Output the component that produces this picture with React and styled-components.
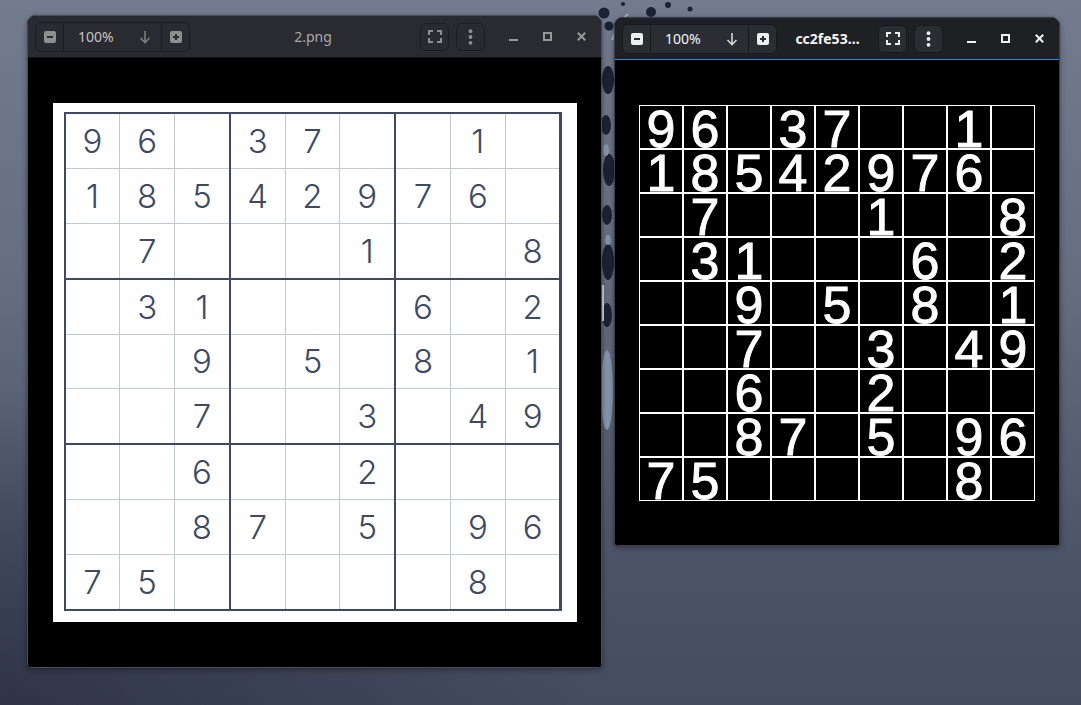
import React from 'react';
import styled, { createGlobalStyle } from 'styled-components';

const GRID = [
  [9, 6, 0, 3, 7, 0, 0, 1, 0],
  [1, 8, 5, 4, 2, 9, 7, 6, 0],
  [0, 7, 0, 0, 0, 1, 0, 0, 8],
  [0, 3, 1, 0, 0, 0, 6, 0, 2],
  [0, 0, 9, 0, 5, 0, 8, 0, 1],
  [0, 0, 7, 0, 0, 3, 0, 4, 9],
  [0, 0, 6, 0, 0, 2, 0, 0, 0],
  [0, 0, 8, 7, 0, 5, 0, 9, 6],
  [7, 5, 0, 0, 0, 0, 0, 8, 0],
];

const Global = createGlobalStyle`
  html, body { margin: 0; padding: 0; width: 1081px; height: 705px; overflow: hidden; }
  body { font-family: "Noto Sans", "Open Sans", sans-serif; }
`;

const Desktop = styled.div`
  position: relative;
  width: 1081px;
  height: 705px;
  overflow: hidden;
  background:
    radial-gradient(ellipse 55% 45% at 0% 100%, rgba(28, 34, 50, 0.55), transparent),
    linear-gradient(180deg, #737b8e 0%, #656d80 40%, #4b5367 80%, #454c60 100%);
`;

const Wallpaper = styled.svg`
  position: absolute;
  inset: 0;
`;

const Window = styled.div`
  position: absolute;
  left: ${(p) => p.$x}px;
  top: ${(p) => p.$y}px;
  width: ${(p) => p.$w}px;
  height: ${(p) => p.$h}px;
  box-sizing: border-box;
  display: flex;
  flex-direction: column;
  border: 1px solid ${(p) => (p.$active ? '#3c404b' : '#4a4f5b')};
  border-radius: 9px 9px 4px 4px;
  overflow: hidden;
  box-shadow: 0 2px 6px rgba(0, 0, 0, 0.35), 0 0 1px rgba(0, 0, 0, 0.6);
  background: #000;
`;

const HeaderBar = styled.div`
  height: 41px;
  flex-shrink: 0;
  display: flex;
  align-items: center;
  padding: 0 3px 0 7px;
  background: ${(p) => (p.$active ? '#1f2024' : '#2a2b31')};
  border-bottom: 1px solid ${(p) => (p.$active ? '#3584e4' : '#121214')};
`;

const ZoomGroup = styled.div`
  display: flex;
  height: 28px;
  border-radius: 6px;
  border: 1px solid ${(p) => (p.$active ? '#18191c' : '#1d1e23')};
  background: ${(p) => (p.$active ? '#2c2d33' : '#2a2b31')};
  overflow: hidden;
`;

const GroupButton = styled.div`
  width: ${(p) => p.$w}px;
  display: flex;
  align-items: center;
  justify-content: center;
  box-sizing: border-box;
  border-right: ${(p) => (p.$sep ? '1px solid ' + (p.$active ? '#18191c' : '#1d1e23') : 'none')};
`;

const ZoomLabel = styled.div`
  width: 98px;
  box-sizing: border-box;
  display: flex;
  align-items: center;
  justify-content: space-between;
  padding: 0 10px 0 14px;
  border-right: 1px solid ${(p) => (p.$active ? '#18191c' : '#1d1e23')};
  font-size: 14px;
  color: ${(p) => (p.$active ? '#f4f4f4' : '#c4c4c6')};
`;

const Title = styled.div`
  flex: 1;
  min-width: 0;
  text-align: center;
  padding-left: ${(p) => p.$shift || 0}px;
  font-size: 14px;
  font-weight: ${(p) => (p.$active ? 700 : 400)};
  color: ${(p) => (p.$active ? '#f4f4f4' : '#a9a9ab')};
  white-space: nowrap;
  overflow: hidden;
`;

const EndButtons = styled.div`
  display: flex;
  gap: 7px;
`;

const IconButton = styled.div`
  width: 29px;
  height: 28px;
  box-sizing: border-box;
  display: flex;
  align-items: center;
  justify-content: center;
  border-radius: 6px;
  border: 1px solid ${(p) => (p.$active ? '#18191c' : '#1d1e23')};
  background: ${(p) => (p.$active ? '#2c2d33' : '#2a2b31')};
`;

const Controls = styled.div`
  display: flex;
  margin-left: 11px;
`;

const ControlButton = styled.div`
  width: 34px;
  height: 28px;
  display: flex;
  align-items: center;
  justify-content: center;
`;

const Content = styled.div`
  flex: 1;
  display: flex;
  align-items: center;
  justify-content: center;
  background: #000;
`;

const Paper = styled.div`
  background: #fff;
  padding: 9px 15px 11px 11px;
`;

const Board = styled.div`
  width: 498px;
  height: 499px;
  box-sizing: border-box;
  border: 2px solid #3e4a63;
  background: #3e4a63;
  display: grid;
  grid-template-columns: repeat(3, 1fr);
  grid-template-rows: repeat(3, 1fr);
  gap: 2px;
`;

const Block = styled.div`
  display: grid;
  grid-template-columns: repeat(3, 1fr);
  grid-template-rows: repeat(3, 1fr);
  gap: 1px;
  background: #c4c7d6;
`;

const Cell = styled.div`
  background: #fff;
  display: flex;
  align-items: center;
  justify-content: center;
  font-family: Inter, "Noto Sans", sans-serif;
  font-weight: 300;
  font-size: 33px;
  color: #3e4a63;
`;

const ScanGrid = styled.div`
  display: grid;
  grid-template-columns: repeat(9, 44px);
  grid-template-rows: repeat(9, 44px);
`;

const ScanCell = styled.div`
  box-sizing: border-box;
  border: 1px solid #fff;
  text-align: center;
  font-family: "Liberation Sans", Arial, sans-serif;
  font-size: 52px;
  line-height: 47px;
  color: #fff;
  overflow: visible;
  -webkit-text-stroke: 0.9px #fff;
`;

const Arrow = styled.svg`
  display: block;
`;

const iconColor = (active) => (active ? '#eeeeee' : '#8f8f92');
const bgColor = (active) => (active ? '#2c2d33' : '#2a2b31');

const MinusIcon = ({ active }) => (
  <svg width="12" height="12" viewBox="0 0 12 12">
    <rect x="0" y="0" width="12" height="12" rx="2" fill={iconColor(active)} />
    <rect x="3" y="5" width="6" height="2" fill={bgColor(active)} />
  </svg>
);

const PlusIcon = ({ active }) => (
  <svg width="12" height="12" viewBox="0 0 12 12">
    <rect x="0" y="0" width="12" height="12" rx="2" fill={iconColor(active)} />
    <rect x="3" y="5" width="6" height="2" fill={bgColor(active)} />
    <rect x="5" y="3" width="2" height="6" fill={bgColor(active)} />
  </svg>
);

const DownIcon = ({ active }) => (
  <Arrow width="12" height="14" viewBox="0 0 12 14">
    <path d="M6 1V12.5M1.5 8L6 12.5L10.5 8" fill="none" stroke={active ? '#d4d4d4' : '#7d7d80'} strokeWidth="1.6" />
  </Arrow>
);

const FullscreenIcon = ({ active }) => (
  <svg width="14" height="13" viewBox="0 0 14 13">
    <path d="M1 5V1H5M9 1H13V5M13 8V12H9M5 12H1V8" fill="none" stroke={iconColor(active)} strokeWidth="2" />
  </svg>
);

const MenuIcon = ({ active }) => (
  <svg width="5" height="16" viewBox="0 0 5 16">
    <circle cx="2.5" cy="2.2" r="1.9" fill={iconColor(active)} />
    <circle cx="2.5" cy="8" r="1.9" fill={iconColor(active)} />
    <circle cx="2.5" cy="13.8" r="1.9" fill={iconColor(active)} />
  </svg>
);

const MinimizeIcon = ({ active }) => (
  <svg width="9" height="9" viewBox="0 0 9 9">
    <rect x="0" y="7" width="9" height="2" fill={active ? '#f2f2f2' : '#98989b'} />
  </svg>
);

const MaximizeIcon = ({ active }) => (
  <svg width="9" height="9" viewBox="0 0 9 9">
    <rect x="1" y="1" width="7" height="7" fill="none" stroke={active ? '#f2f2f2' : '#98989b'} strokeWidth="2" />
  </svg>
);

const CloseIcon = ({ active }) => (
  <svg width="9" height="9" viewBox="0 0 9 9">
    <path d="M0.8 0.8L8.2 8.2M8.2 0.8L0.8 8.2" stroke={active ? '#f2f2f2' : '#98989b'} strokeWidth="2" />
  </svg>
);

function Header({ active, title, shift }) {
  return (
    <HeaderBar $active={active}>
      <ZoomGroup $active={active}>
        <GroupButton $w={28} $sep $active={active}>
          <MinusIcon active={active} />
        </GroupButton>
        <ZoomLabel $active={active}>
          <span>100%</span>
          <DownIcon active={active} />
        </ZoomLabel>
        <GroupButton $w={27} $active={active}>
          <PlusIcon active={active} />
        </GroupButton>
      </ZoomGroup>
      <Title $active={active} $shift={shift}>{title}</Title>
      <EndButtons>
        <IconButton $active={active}>
          <FullscreenIcon active={active} />
        </IconButton>
        <IconButton $active={active}>
          <MenuIcon active={active} />
        </IconButton>
      </EndButtons>
      <Controls>
        <ControlButton><MinimizeIcon active={active} /></ControlButton>
        <ControlButton><MaximizeIcon active={active} /></ControlButton>
        <ControlButton><CloseIcon active={active} /></ControlButton>
      </Controls>
    </HeaderBar>
  );
}

function SudokuBoard() {
  const blocks = [];
  for (let br = 0; br < 3; br++) {
    for (let bc = 0; bc < 3; bc++) {
      const cells = [];
      for (let r = 0; r < 3; r++) {
        for (let c = 0; c < 3; c++) {
          const v = GRID[br * 3 + r][bc * 3 + c];
          cells.push(<Cell key={r * 3 + c}>{v || ''}</Cell>);
        }
      }
      blocks.push(<Block key={br * 3 + bc}>{cells}</Block>);
    }
  }
  return (
    <Paper>
      <Board>{blocks}</Board>
    </Paper>
  );
}

function ScanBoard() {
  return (
    <ScanGrid>
      {GRID.flat().map((v, i) => (
        <ScanCell key={i}>{v || ''}</ScanCell>
      ))}
    </ScanGrid>
  );
}

export default function App() {
  return (
    <>
      <Global />
      <Desktop>
        <Wallpaper width="1081" height="705" viewBox="0 0 1081 705">
          <g fill="#1b2236">
            <circle cx="604" cy="13" r="5.5" />
            <circle cx="609" cy="26" r="4.5" />
            <circle cx="651" cy="12" r="5" />
            <circle cx="668" cy="5" r="3" />
            <circle cx="690" cy="9" r="2.5" />
            <circle cx="623" cy="4" r="2" />
            <ellipse cx="608" cy="80" rx="6" ry="14" />
            <ellipse cx="606" cy="125" rx="5" ry="10" />
            <ellipse cx="609" cy="170" rx="6" ry="16" />
            <ellipse cx="607" cy="215" rx="5" ry="10" />
            <ellipse cx="608" cy="262" rx="6" ry="18" />
            <ellipse cx="607" cy="315" rx="5" ry="12" />
          </g>
          <g fill="#8494aa">
            <ellipse cx="606" cy="150" rx="3" ry="6" />
            <ellipse cx="608" cy="240" rx="3" ry="5" />
            <ellipse cx="607" cy="390" rx="6" ry="40" />
          </g>
          <rect x="601" y="285" width="3" height="36" fill="#d3d6dc" />
          <path d="M612 40 Q618 22 628 14" stroke="#aab4c4" strokeWidth="2" fill="none" />
        </Wallpaper>

        <Window $x={27} $y={15} $w={575} $h={653}>
          <Header title="2.png" shift={16} />
          <Content>
            <SudokuBoard />
          </Content>
        </Window>

        <Window $x={614} $y={17} $w={446} $h={529} $active>
          <Header active title="cc2fe53…" />
          <Content>
            <ScanBoard />
          </Content>
        </Window>
      </Desktop>
    </>
  );
}
